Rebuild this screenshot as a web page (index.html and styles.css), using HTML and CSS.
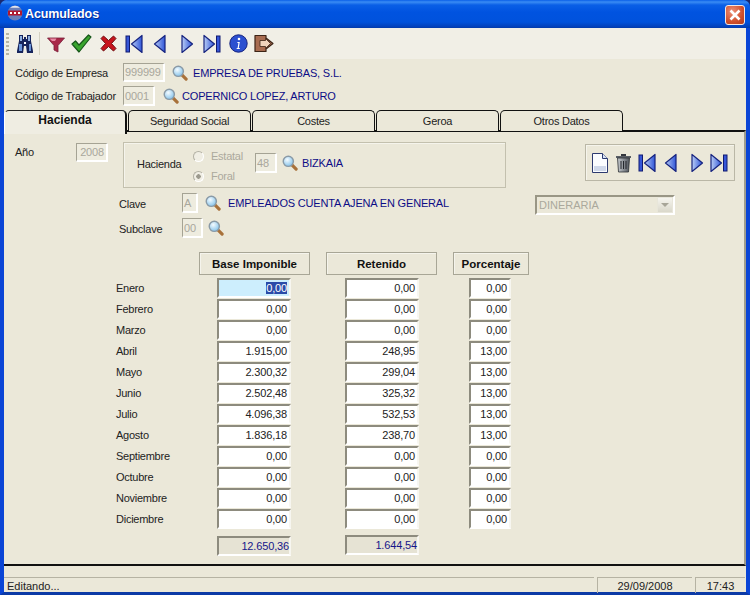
FILE: index.html
```html
<!DOCTYPE html>
<html lang="es">
<head>
<meta charset="utf-8">
<title>Acumulados</title>
<link rel="stylesheet" href="styles.css">
</head>
<body>
<svg class="defs" width="0" height="0" aria-hidden="true">
  <defs>
    <linearGradient id="navr" x1="0" y1="0" x2="1" y2="0"><stop offset="0" stop-color="#b9cdf5"/><stop offset="1" stop-color="#2f55d8"/></linearGradient>
    <radialGradient id="lens" cx=".4" cy=".35" r=".7"><stop offset="0" stop-color="#f4fbff"/><stop offset="1" stop-color="#7fc0ea"/></radialGradient>
    <linearGradient id="trash" x1="0" y1="0" x2="1" y2="0"><stop offset="0" stop-color="#c8ccd0"/><stop offset="1" stop-color="#50555c"/></linearGradient>
    <symbol id="lupa" viewBox="0 0 17 17">
      <path d="M10 10l5 5" stroke="#a8713a" stroke-width="3.4" stroke-linecap="round"/>
      <circle cx="6.7" cy="6.7" r="5.4" fill="url(#lens)" stroke="#8a9aa6" stroke-width="1.5"/>
    </symbol>
    <symbol id="first" viewBox="0 0 18 20">
      <rect x="1" y="2" width="3.5" height="16" fill="#3656d8" stroke="#101a70" stroke-width="1"/>
      <path d="M17 1.500v17L6.500 10z" fill="url(#navr)" stroke="#16237f" stroke-width="1.200" stroke-linejoin="round"/>
    </symbol>
    <symbol id="prev" viewBox="0 0 13 20">
      <path d="M12 1.500v17L1.500 10z" fill="url(#navr)" stroke="#16237f" stroke-width="1.200" stroke-linejoin="round"/>
    </symbol>
    <symbol id="next" viewBox="0 0 13 20">
      <path d="M1 1.500v17L11.500 10z" fill="url(#navr)" stroke="#16237f" stroke-width="1.200" stroke-linejoin="round"/>
    </symbol>
    <symbol id="last" viewBox="0 0 18 20">
      <path d="M1 1.500v17L11.500 10z" fill="url(#navr)" stroke="#16237f" stroke-width="1.200" stroke-linejoin="round"/>
      <rect x="13.500" y="2" width="3.500" height="16" fill="#3656d8" stroke="#101a70" stroke-width="1"/>
    </symbol>
  </defs>
</svg>

<div class="window">
  <header class="titlebar">
    <svg class="app-icon" width="16" height="16" viewBox="0 0 16 16"><circle cx="8" cy="8" r="7.500" fill="#6c7fb8"/><path d="M1 5.500h14v5H1z" fill="#b01830"/><path d="M3 7h2v2H3zM7 7h2v2H7zM11 7h2v2h-2z" fill="#fff"/><path d="M3 2.800a7 7 0 0 1 10 0z" fill="#e5e8f0"/></svg>
    <span class="title">Acumulados</span>
    <span class="close"><svg width="12" height="12" viewBox="0 0 12 12"><path d="M1.500 1.500l9 9M10.500 1.500l-9 9" stroke="#fff" stroke-width="2.600"/></svg></span>
  </header>

  <div class="toolbar">
    <span class="grip"></span>
    <svg class="ti ti-bino" width="18" height="20" viewBox="0 0 18 20"><path d="M3 1h4v4h1v-2h2v2h1V1h4v6l2 10v2h-6l-1-7H8l-1 7H1v-2L3 7z" fill="#16245c"/><path d="M4 2h2v5H4zM12 2h2v5h-2z" fill="#8fb0e0"/><path d="M3 10h3v7H3zM13 10h2v7h-2z" fill="#6a94d8"/><path d="M8 8h2v2H8z" fill="#fff"/></svg>
    <span class="tsep"></span>
    <svg class="ti ti-funnel" width="18" height="18" viewBox="0 0 18 18"><path d="M.5 3h17L11 10.500V17l-4-2v-4.500z" fill="#a82848" stroke="#7a2038" stroke-width=".8"/><path d="M2.500 3.600h7L8 6H5z" fill="#e88aa4"/></svg>
    <svg class="ti ti-check" width="21" height="19" viewBox="0 0 21 19"><path d="M1 10l3.500-3 3.500 4L17.500 1 20 3 8 18z" fill="#3aa52e" stroke="#17561a" stroke-width="1.200" stroke-linejoin="round"/></svg>
    <svg class="ti ti-x" width="17" height="17" viewBox="0 0 17 17"><path d="M3.500 1L8.500 5.500 13.500 1 16 3.500 11.500 8.500 16 13.500 13.500 16 8.500 11.500 3.500 16 1 13.500 5.500 8.500 1 3.500z" fill="#c8141c" stroke="#6e1014" stroke-width="1"/></svg>
    <svg class="ti ti-first" width="18" height="20"><use href="#first"/></svg>
    <svg class="ti ti-prev" width="13" height="20"><use href="#prev"/></svg>
    <svg class="ti ti-next" width="13" height="20"><use href="#next"/></svg>
    <svg class="ti ti-last" width="18" height="20"><use href="#last"/></svg>
    <svg class="ti ti-info" width="19" height="19" viewBox="0 0 19 19"><circle cx="9.500" cy="9.500" r="8.700" fill="#2c50d0" stroke="#16237f" stroke-width="1"/><circle cx="10" cy="5" r="1.300" fill="#fff"/><path d="M8.500 8h2.300l-1 6h1v1H7.500l.3-1h.8l.8-5H8.300z" fill="#fff"/></svg>
    <svg class="ti ti-exit" width="20" height="19" viewBox="0 0 20 19"><path d="M1 1.500h11v2.500l7 5.500-7 5.500v2.500H1z" fill="#a86c50" stroke="#3c2416" stroke-width="1.200" stroke-linejoin="round"/><path d="M6 6.500h5.500V4.500l5 5-5 5v-2H6z" fill="#f0d4bc" stroke="#3c2416" stroke-width=".8"/></svg>
  </div>

  <div class="fields">
    <div class="frow">
      <span class="flabel">Código de Empresa</span>
      <span class="box dis tl w-42">999999</span>
      <svg class="lupa gap-7" width="16" height="16"><use href="#lupa"/></svg>
      <span class="link gap-5">EMPRESA DE PRUEBAS, S.L.</span>
    </div>
    <div class="frow frow-2">
      <span class="flabel">Código de Trabajador</span>
      <span class="box dis tl w-32">0001</span>
      <svg class="lupa gap-8" width="16" height="16"><use href="#lupa"/></svg>
      <span class="link gap-3">COPERNICO LOPEZ, ARTURO</span>
    </div>
  </div>

  <nav class="tabs">
    <span class="tab active">Hacienda</span>
    <span class="tab">Seguridad Social</span>
    <span class="tab">Costes</span>
    <span class="tab">Geroa</span>
    <span class="tab">Otros Datos</span>
  </nav>

  <main class="panel">
    <div class="top">
      <span class="year-label">Año</span>
      <span class="box dis w-32 year">2008</span>
      <div class="group">
        <span class="group-label">Hacienda</span>
        <div class="radios">
          <span class="radio"><i class="dot"></i>Estatal</span>
          <span class="radio"><i class="dot on"></i>Foral</span>
        </div>
        <span class="box dis w-22 h-20 tl">48</span>
        <svg class="lupa gap-5" width="16" height="16"><use href="#lupa"/></svg>
        <span class="link gap-4">BIZKAIA</span>
      </div>
      <div class="navgroup">
        <svg width="16" height="20" viewBox="0 0 16 20"><path d="M.5.5h10l5 5v14H.5z" fill="#fafcff" stroke="#2c3a70"/><path d="M10.500.5v5h5" fill="#d8e2f4" stroke="#2c3a70"/><path d="M2 13h12v5H2z" fill="#cfd8ea"/></svg>
        <svg class="n-trash" width="17" height="20" viewBox="0 0 17 20"><path d="M1 3h15v2H1z" fill="#5a5f66"/><path d="M6 1h5v2H6z" fill="#33363c"/><path d="M2.500 5h12l-1 14h-10z" fill="url(#trash)" stroke="#2a2d32" stroke-width=".8"/><path d="M6 8v8M8.500 8v8M11 8v8" stroke="#24272c"/></svg>
        <svg class="n-first" width="18" height="20"><use href="#first"/></svg>
        <svg class="n-prev" width="13" height="20"><use href="#prev"/></svg>
        <svg class="n-next" width="13" height="20"><use href="#next"/></svg>
        <svg class="n-last" width="18" height="20"><use href="#last"/></svg>
      </div>
    </div>

    <div class="crow crow-1">
      <span class="clabel">Clave</span>
      <span class="box dis w-16 h-20 tl">A</span>
      <svg class="lupa gap-7" width="16" height="16"><use href="#lupa"/></svg>
      <span class="link gap-7">EMPLEADOS CUENTA AJENA EN GENERAL</span>
      <span class="combo"><span class="combo-text">DINERARIA</span><span class="combo-btn"></span></span>
    </div>
    <div class="crow crow-2">
      <span class="clabel">Subclave</span>
      <span class="box dis w-21 h-20 tl">00</span>
      <svg class="lupa gap-5" width="16" height="16"><use href="#lupa"/></svg>
    </div>

    <div class="grid">
      <span></span><span class="head">Base Imponible</span><span class="head">Retenido</span><span class="head">Porcentaje</span>

      <span class="month">Enero</span><span class="box num w-74 focus"><b class="sel">0,00</b></span><span class="box num w-74">0,00</span><span class="box num w-42">0,00</span>
      <span class="month">Febrero</span><span class="box num w-74">0,00</span><span class="box num w-74">0,00</span><span class="box num w-42">0,00</span>
      <span class="month">Marzo</span><span class="box num w-74">0,00</span><span class="box num w-74">0,00</span><span class="box num w-42">0,00</span>
      <span class="month">Abril</span><span class="box num w-74">1.915,00</span><span class="box num w-74">248,95</span><span class="box num w-42">13,00</span>
      <span class="month">Mayo</span><span class="box num w-74">2.300,32</span><span class="box num w-74">299,04</span><span class="box num w-42">13,00</span>
      <span class="month">Junio</span><span class="box num w-74">2.502,48</span><span class="box num w-74">325,32</span><span class="box num w-42">13,00</span>
      <span class="month">Julio</span><span class="box num w-74">4.096,38</span><span class="box num w-74">532,53</span><span class="box num w-42">13,00</span>
      <span class="month">Agosto</span><span class="box num w-74">1.836,18</span><span class="box num w-74">238,70</span><span class="box num w-42">13,00</span>
      <span class="month">Septiembre</span><span class="box num w-74">0,00</span><span class="box num w-74">0,00</span><span class="box num w-42">0,00</span>
      <span class="month">Octubre</span><span class="box num w-74">0,00</span><span class="box num w-74">0,00</span><span class="box num w-42">0,00</span>
      <span class="month">Noviembre</span><span class="box num w-74">0,00</span><span class="box num w-74">0,00</span><span class="box num w-42">0,00</span>
      <span class="month">Diciembre</span><span class="box num w-74">0,00</span><span class="box num w-74">0,00</span><span class="box num w-42">0,00</span>

      <span></span><span class="box num w-74 total total-a">12.650,36</span><span class="box num w-74 total total-b">1.644,54</span><span></span>
    </div>
  </main>

  <footer class="status">
    <span class="st st-main">Editando...</span>
    <span class="st st-date">29/09/2008</span>
    <span class="st st-time">17:43</span>
  </footer>
</div>
</body>
</html>
```
FILE: styles.css
```css
* { box-sizing: border-box; }
html, body { margin: 0; padding: 0; background: #1a2a70; }
body { width: 750px; height: 595px; overflow: hidden; font-family: "Liberation Sans", Arial, sans-serif; font-size: 11px; letter-spacing: -.25px; color: #222; }
.defs { position: absolute; }
svg { display: block; flex: none; }

.window { width: 750px; height: 595px; display: flex; flex-direction: column; background: #ebe8d9; border: solid #0a45d6; border-width: 0 4px 3px 4px; border-bottom-color: #0c3aa6; border-radius: 7px 7px 0 0; }

.titlebar { height: 28px; margin: 0 -4px; padding: 0 5px 0 7px; display: flex; align-items: center; flex: none; border-radius: 7px 7px 0 0; background: linear-gradient(#0a5fe8 0, #3a8cf4 2px, #0a5fe6 5px, #0053e0 12px, #0052dc 22px, #0340b8 27px, #023aa8 28px); }
.app-icon { margin-top: -2px; }
.title { margin-left: 2px; font-size: 12.500px; letter-spacing: -.1px; font-weight: bold; color: #fff; text-shadow: 1px 1px 0 #0a2a90; }
.close { margin-left: auto; width: 20px; height: 20px; margin-top: 1px; display: flex; align-items: center; justify-content: center; border: 1px solid #f4e6e0; border-radius: 3px; background: radial-gradient(circle at 35% 30%, #ec9078, #d0502c 60%, #b03a1c); }

.toolbar { height: 31px; flex: none; display: flex; align-items: center; background: #f1efe6; padding-left: 2px; }
.grip { width: 3px; height: 22px; background: repeating-linear-gradient(#b8b5a5 0 2px, #f1efe6 2px 4px); }
.tsep { width: 1px; height: 23px; margin-left: 5px; background: #d4d1c2; }
.ti-bino { margin-left: 7px; }
.ti-funnel { margin-left: 7px; }
.ti-check { margin-left: 6px; }
.ti-x { margin-left: 8px; }
.ti-first { margin-left: 8px; }
.ti-prev { margin-left: 10px; }
.ti-next { margin-left: 15px; }
.ti-last { margin-left: 9px; }
.ti-info { margin-left: 8px; }
.ti-exit { margin-left: 6px; }

.fields { height: 51px; flex: none; padding: 4px 0 0 11px; }
.frow { display: flex; align-items: center; height: 19px; }
.frow-2 { margin-top: 4px; height: 20px; }
.flabel { width: 108px; white-space: nowrap; }
.link { color: #0c0c86; white-space: nowrap; letter-spacing: -.17px; }
.gap-3 { margin-left: 3px; }
.gap-4 { margin-left: 4px; }
.gap-5 { margin-left: 5px; }
.gap-7 { margin-left: 7px; }
.gap-8 { margin-left: 8px; }

.box { display: flex; align-items: center; justify-content: flex-end; height: 20px; flex: none; padding-right: 2px; background: #fff; border: 2px solid; border-color: #8d8b7e #f7f6f0 #fff #8d8b7e; font-size: 11px; color: #222; white-space: nowrap; letter-spacing: -.15px; }
.dis { background: #eeecdf; color: #a9a79c; border-color: #a5a394 #fff #fff #a5a394; border-width: 1px 2px 2px 1px; height: 19px; }
.frow-2 .dis { height: 20px; }
.tl { justify-content: flex-start; padding: 0 0 0 1px; }
.h-20 { height: 20px; }
.w-16 { width: 16px; }
.w-21 { width: 21px; }
.w-22 { width: 22px; }
.w-32 { width: 32px; }
.w-42 { width: 42px; }
.w-74 { width: 74px; }

.tabs { height: 20px; flex: none; display: flex; gap: 1px; position: relative; z-index: 1; }
.tab { width: 123px; height: 21px; display: flex; align-items: center; justify-content: center; padding-bottom: 1px; background: #ebe8d9; border: 1px solid #111; border-bottom: 0; border-radius: 5px 5px 0 0; }
.active { height: 24px; padding-bottom: 5px; font-size: 12px; letter-spacing: 0; font-weight: bold; color: #111; background: #efede2; border-top: 1px solid #222; border-left: 1px solid #fff; border-right: 2px solid #111; }

.panel { height: 436px; flex: none; border-top: 2px solid #111; border-right: 2px solid #a09e8f; border-bottom: 2px solid #111; border-left: 0; }
.top { display: flex; align-items: flex-start; padding: 10px 0 0 11px; }
.year-label { width: 61px; margin-top: 4px; }
.year { height: 19px; margin-top: 1px; }
.group { width: 383px; height: 46px; margin-left: 15px; padding: 0 0 4px 13px; display: flex; align-items: center; border: 1px solid #c3c0ae; box-shadow: inset 1px 1px 0 #f5f4ec; }
.group-label { width: 56px; margin-top: 2px; }
.radios { width: 62px; display: flex; flex-direction: column; gap: 7px; margin-top: 6px; }
.radio { display: flex; align-items: center; color: #aba99d; height: 13px; }
.dot { width: 11px; height: 11px; margin-right: 7px; border-radius: 50%; border: 1px solid #b3b1a5; border-right-color: #fff; border-bottom-color: #fff; background: #f0eee4; }
.dot.on { background: radial-gradient(circle, #9c9a8e 0 2px, #f0eee4 2.500px); }
.navgroup { width: 150px; height: 37px; margin: 2px 0 0 79px; padding-left: 6px; display: flex; align-items: center; border: 1px solid #bab7a6; box-shadow: inset 1px 1px 0 #f5f4ec; }
.n-trash { margin-left: 7px; }
.n-first { margin-left: 6px; }
.n-prev { margin-left: 8px; }
.n-next { margin-left: 14px; }
.n-last { margin-left: 6px; }

.crow { display: flex; align-items: center; height: 20px; padding-left: 115px; }
.crow-1 { margin-top: 5px; }
.crow-2 { margin-top: 5px; }
.clabel { width: 63px; padding-top: 2px; }
.combo { margin: 4px 69px 0 auto; width: 140px; height: 20px; display: flex; align-items: center; background: #ebe8d9; border: 2px solid; border-color: #999685 #fff #fff #999685; color: #aaa89c; font-size: 11px; letter-spacing: 0; }
.combo-text { flex: 1; padding-left: 2px; }
.combo-btn { width: 16px; height: 16px; background: linear-gradient(#f5f4ee, #dad8cb); position: relative; border: 1px solid #e8e6da; }
.combo-btn::after { content: ""; position: absolute; left: 3px; top: 5px; border: 4px solid transparent; border-top: 4px solid #a7a598; border-bottom: 0; }

.grid { margin: 14px 0 0 112px; display: grid; grid-template-columns: 67px 111px 111px 76px; grid-template-rows: 25px; column-gap: 16px; row-gap: 1px; grid-auto-rows: 20px; justify-items: start; align-items: start; }
.grid > .head { width: 100%; height: 23px; display: flex; align-items: center; justify-content: center; font-weight: bold; font-size: 11.500px; letter-spacing: 0; color: #111; border: 1px solid #a8a696; box-shadow: inset 1px 1px 0 #f5f4ec; margin-bottom: 3px; }
.grid > .box:nth-child(4n+2) { margin-left: 18px; }
.grid > .box:nth-child(4n+3) { margin-left: 19px; }
.grid > .box:nth-child(4n+4) { margin-left: 16px; }
.month { justify-self: start; align-self: center; white-space: nowrap; }
.focus { background: #cdeefd; }
.sel { font-weight: normal; background: #2a4ba8; color: #fff; }
.grid > .total { background: #e6e3d4; color: #16168a; margin-top: 5px; padding-right: 0; }
.grid > .total-a { margin-top: 6px; }

.status { height: 27px; flex: none; display: flex; gap: 3px; padding: 11px 1px 0 0; }
.st { height: 16px; display: flex; align-items: center; border: solid #b6b3a3; border-width: 1px 0 0 1px; font-size: 11px; color: #222; letter-spacing: 0; }
.st-main { flex: 1; padding-left: 3px; border-left: 0; }
.st-date { width: 95px; justify-content: center; }
.st-time { width: 50px; justify-content: center; }
```
